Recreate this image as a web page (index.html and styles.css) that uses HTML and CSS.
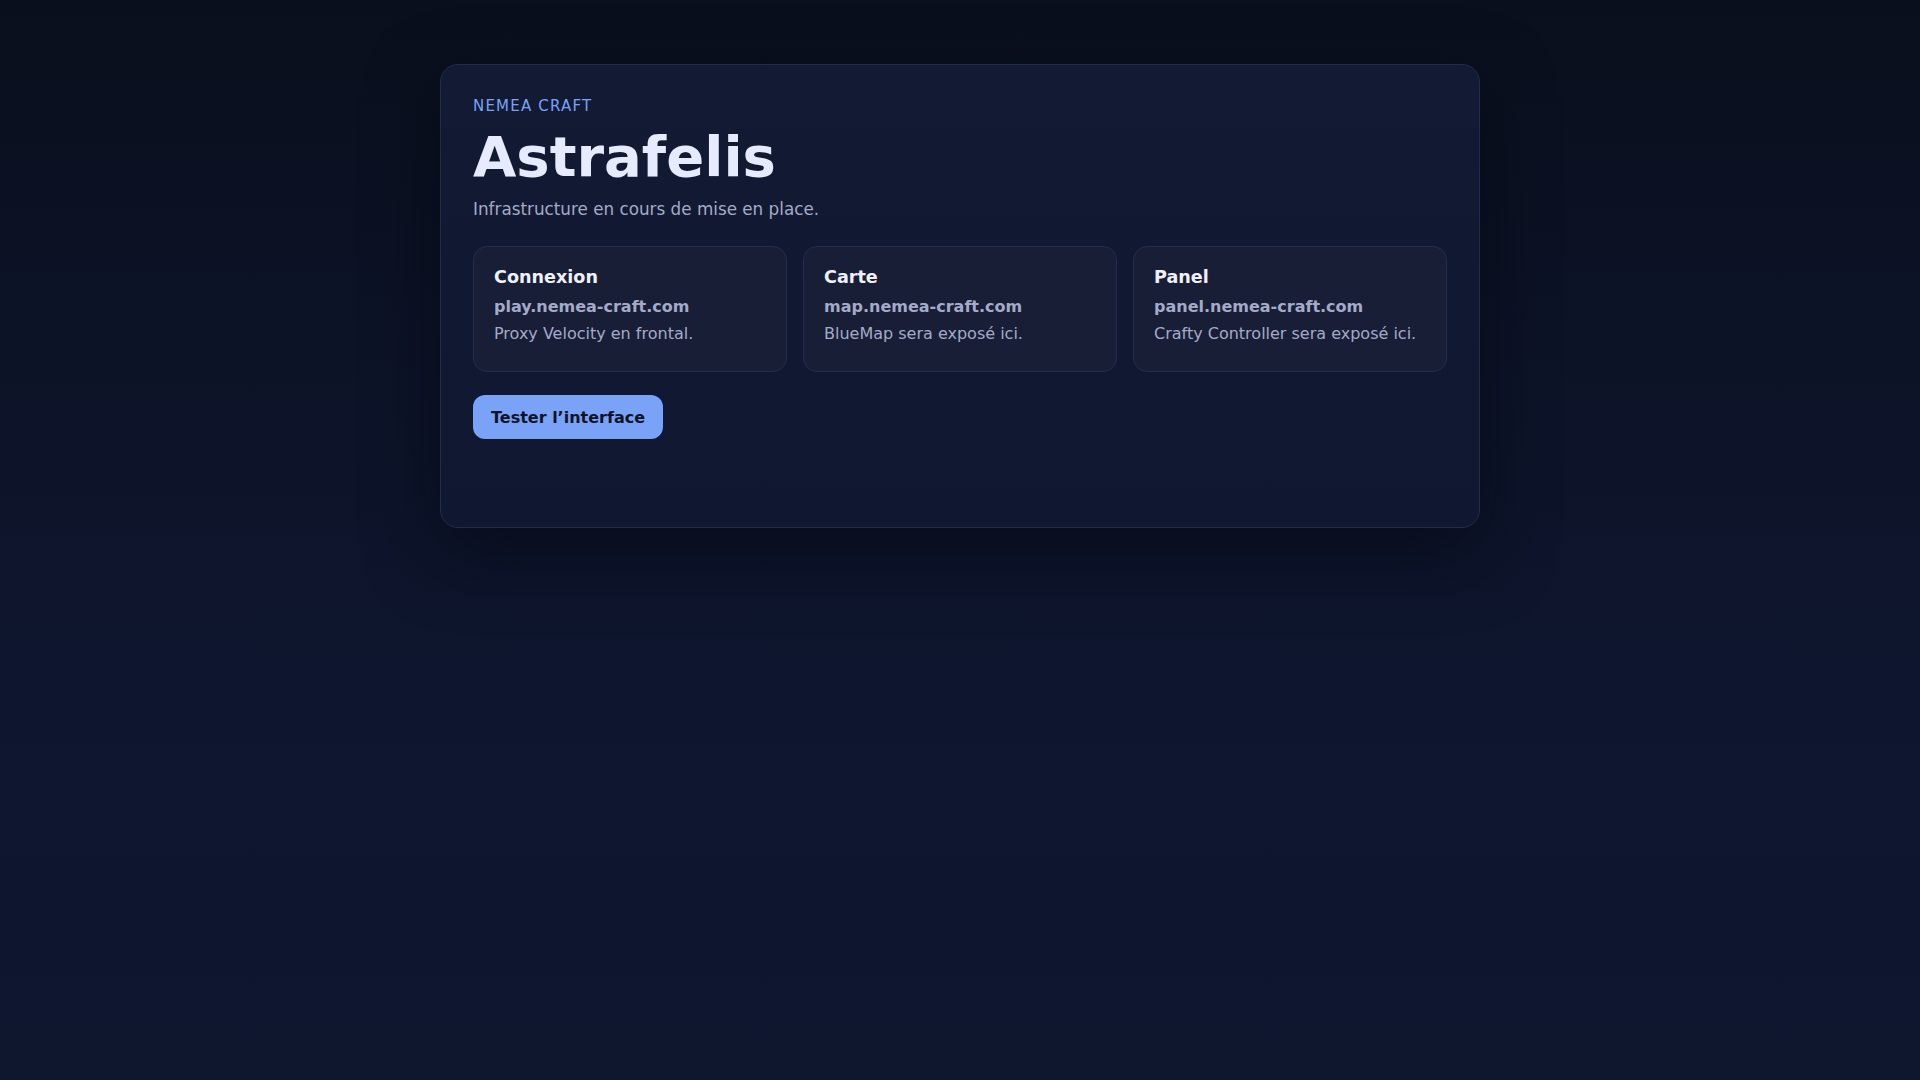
FILE: index.html
```html
<!DOCTYPE html>
<html lang="fr">
<head>
<meta charset="utf-8">
<title>Astrafelis</title>
<link rel="stylesheet" href="styles.css">
</head>
<body>
<main class="page">
  <section class="panel">
    <p class="eyebrow">NEMEA CRAFT</p>
    <h1 class="title">Astrafelis</h1>
    <p class="lead">Infrastructure en cours de mise en place.</p>
    <div class="grid">
      <article class="tile">
        <h2 class="tile-title">Connexion</h2>
        <p class="tile-host">play.nemea-craft.com</p>
        <p class="tile-desc">Proxy Velocity en frontal.</p>
      </article>
      <article class="tile">
        <h2 class="tile-title">Carte</h2>
        <p class="tile-host">map.nemea-craft.com</p>
        <p class="tile-desc">BlueMap sera exposé ici.</p>
      </article>
      <article class="tile">
        <h2 class="tile-title">Panel</h2>
        <p class="tile-host">panel.nemea-craft.com</p>
        <p class="tile-desc">Crafty Controller sera exposé ici.</p>
      </article>
    </div>
    <div class="actions">
      <button class="btn" type="button">Tester l’interface</button>
    </div>
  </section>
</main>
</body>
</html>
```

FILE: styles.css
```css
* { box-sizing: border-box; }
html, body { margin: 0; padding: 0; }
body {
  min-height: 100vh;
  font-family: "DejaVu Sans", sans-serif;
  color: #e6eaff;
  background: linear-gradient(180deg, #0a0f1d 0%, #0d1429 40%, #0e1630 70%, #0f172f 100%);
}
.page {
  display: flex;
  justify-content: center;
  padding-top: 64px;
}
.panel {
  width: 1040px;
  min-height: 464px;
  padding: 32px;
  border: 1px solid #222b48;
  border-radius: 18px;
  background: linear-gradient(180deg, #131a34 0%, #0f1830 100%);
  box-shadow: 0 24px 70px rgba(3, 6, 14, 0.55);
}
.eyebrow {
  margin: -1px 0 0;
  font-size: 15px;
  line-height: 21px;
  letter-spacing: 0.08em;
  color: #7aa2f7;
}
.title {
  margin: 9px 0 0;
  font-size: 56px;
  line-height: 1.1;
  font-weight: 700;
  color: #e6ebff;
}
.lead {
  margin: 9px 0 0;
  font-size: 16.8px;
  line-height: 1.5;
  color: #a3abc8;
}
.grid {
  display: grid;
  grid-template-columns: repeat(3, 1fr);
  gap: 16px;
  margin-top: 24px;
}
.tile {
  min-height: 126px;
  padding: 20px;
  border: 1px solid #252d4a;
  border-radius: 14px;
  background: #181e36;
}
.tile-title {
  margin: 0;
  font-size: 17.6px;
  line-height: normal;
  font-weight: 700;
  color: #eef0fb;
}
.tile-host {
  margin: 8px 0 0;
  font-size: 16px;
  line-height: 1.5;
  font-weight: 700;
  color: #a3abc8;
}
.tile-desc {
  margin: 3px 0 0;
  font-size: 16px;
  line-height: 1.5;
  color: #a3abc8;
}
.actions {
  margin-top: 23px;
}
.btn {
  padding: 10px 18px 9px;
  border: 0;
  border-radius: 12px;
  background: #7aa2f7;
  color: #0e1426;
  font-family: inherit;
  font-size: 16px;
  line-height: 25px;
  font-weight: 700;
  cursor: pointer;
}
```
